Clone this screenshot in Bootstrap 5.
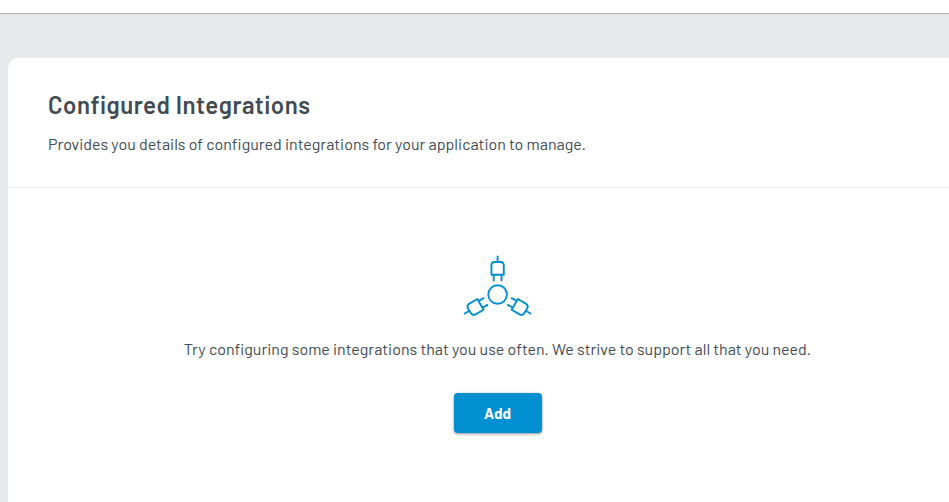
<!DOCTYPE html>
<html lang="en">
<head>
<meta charset="utf-8">
<meta name="viewport" content="width=device-width, initial-scale=1">
<title>Configured Integrations</title>
<link href="https://cdn.jsdelivr.net/npm/bootstrap@5.3.0/dist/css/bootstrap.min.css" rel="stylesheet">
<style>
body { font-family: Barlow, Roboto, "Liberation Sans", sans-serif; color: #414b54; background: #e7e8ea; }
.topbar { height: 14px; border-bottom: 1px solid #abafb3; }
.panel { width: 979px; margin: 44px 0 0 8px; border-radius: 10px 0 0 0; }
.panel-head { height: 130px; padding: 32px 40px 0; border-bottom: 1px solid #e7e8ea; }
.panel-title { font-size: 24px; line-height: 30px; font-weight: 600; letter-spacing: .5px; }
.copy { font-size: 16px; line-height: 24px; white-space: nowrap; }
.empty { padding-top: 66px; }
.empty-icon { margin-bottom: 19px; }
.btn-add { --bs-btn-color: #fff; --bs-btn-bg: #008fd0; --bs-btn-hover-bg: #007db7; --bs-btn-hover-color: #fff; width: 88px; height: 40px; margin-top: 32px; border: 0; border-radius: 4px; font-size: 15px; font-weight: 700; box-shadow: 0 1px 3px rgba(0,0,0,.45); }
</style>
<script src="https://cdn.jsdelivr.net/npm/bootstrap@5.3.0/dist/js/bootstrap.bundle.min.js"></script>
</head>
<body class="vh-100 overflow-hidden d-flex flex-column">
<header class="topbar bg-white flex-shrink-0"></header>
<main class="panel bg-white flex-grow-1 flex-shrink-0">
  <div class="panel-head">
    <h1 class="panel-title mb-0">Configured Integrations</h1>
    <p class="copy mb-0 mt-2 pt-1">Provides you details of configured integrations for your application to manage.</p>
  </div>
  <section class="empty d-flex flex-column align-items-center">
    <svg class="empty-icon" width="72" height="64" viewBox="-36 -40.5 72 64" fill="none" stroke="#008fd0" stroke-width="1.900" stroke-linecap="round" stroke-linejoin="round" aria-hidden="true">
      <defs><g id="plug"><path d="M0-38v5.500M-6.200-19.800v-9.200q0-3.500 3.500-3.500h5.400q3.500 0 3.500 3.500v9.200zM-3.900-19.500v5.500M3.900-19.500v5.500"/></g></defs>
      <g transform="translate(-.4 0)">
        <circle r="9.300"/>
        <use href="#plug"/><use href="#plug" transform="rotate(120)"/><use href="#plug" transform="rotate(240)"/>
      </g>
    </svg>
    <p class="copy mb-0">Try configuring some integrations that you use often. We strive to support all that you need.</p>
    <button type="button" class="btn btn-add p-0">Add</button>
  </section>
</main>
</body>
</html>
